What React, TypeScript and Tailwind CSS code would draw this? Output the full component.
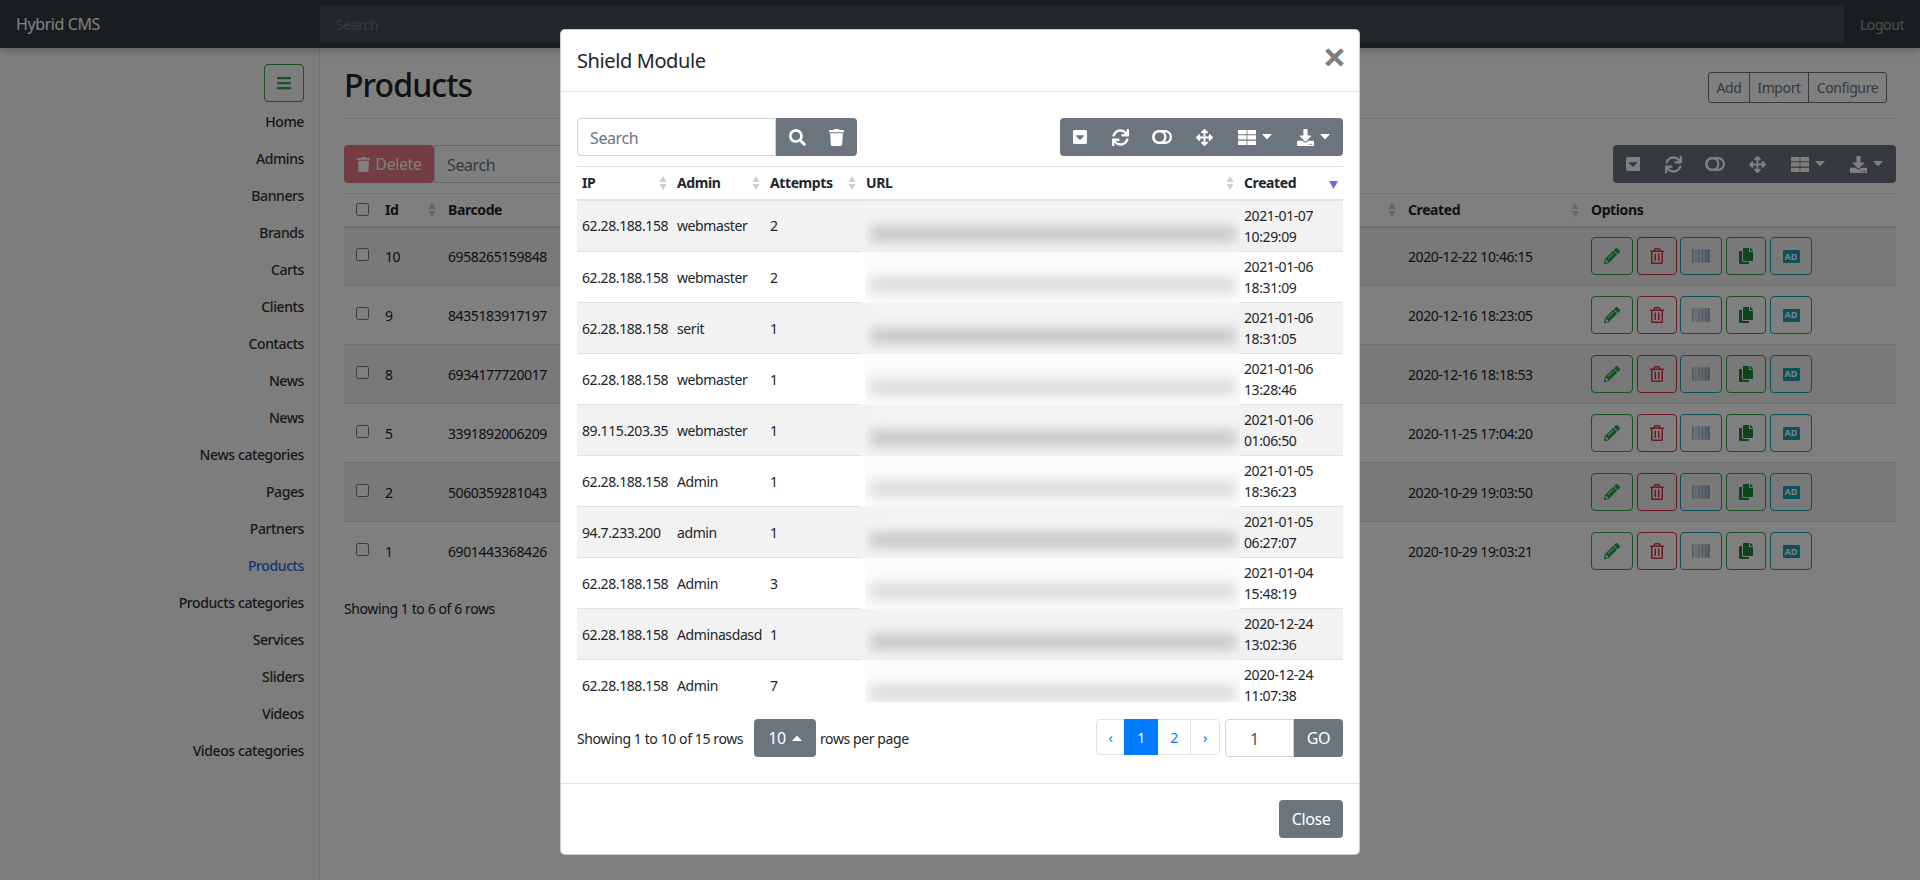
import { FaArrowsAlt, FaBars, FaBarcode, FaCaretSquareDown, FaCopy, FaDownload, FaPencilAlt, FaRegTrashAlt, FaSearch, FaSync, FaTrash } from "react-icons/fa";

const menu = ["Home", "Admins", "Banners", "Brands", "Carts", "Clients", "Contacts", "News", "News", "News categories", "Pages", "Partners", "Products", "Products categories", "Services", "Sliders", "Videos", "Videos categories"];

const products = [
  { id: 10, barcode: "6958265159848", created: "2020-12-22 10:46:15" },
  { id: 9, barcode: "8435183917197", created: "2020-12-16 18:23:05" },
  { id: 8, barcode: "6934177720017", created: "2020-12-16 18:18:53" },
  { id: 5, barcode: "3391892006209", created: "2020-11-25 17:04:20" },
  { id: 2, barcode: "5060359281043", created: "2020-10-29 19:03:50" },
  { id: 1, barcode: "6901443368426", created: "2020-10-29 19:03:21" },
];

const attempts = [
  { ip: "62.28.188.158", admin: "webmaster", n: 2, date: "2021-01-07", time: "10:29:09" },
  { ip: "62.28.188.158", admin: "webmaster", n: 2, date: "2021-01-06", time: "18:31:09" },
  { ip: "62.28.188.158", admin: "serit", n: 1, date: "2021-01-06", time: "18:31:05" },
  { ip: "62.28.188.158", admin: "webmaster", n: 1, date: "2021-01-06", time: "13:28:46" },
  { ip: "89.115.203.35", admin: "webmaster", n: 1, date: "2021-01-06", time: "01:06:50" },
  { ip: "62.28.188.158", admin: "Admin", n: 1, date: "2021-01-05", time: "18:36:23" },
  { ip: "94.7.233.200", admin: "admin", n: 1, date: "2021-01-05", time: "06:27:07" },
  { ip: "62.28.188.158", admin: "Admin", n: 3, date: "2021-01-04", time: "15:48:19" },
  { ip: "62.28.188.158", admin: "Adminasdasd", n: 1, date: "2020-12-24", time: "13:02:36" },
  { ip: "62.28.188.158", admin: "Admin", n: 7, date: "2020-12-24", time: "11:07:38" },
];

function Sort() {
  return (
    <svg width="8" height="16" viewBox="0 0 8 16" className="shrink-0 fill-[#cfcfcf]">
      <path d="M4 1 7.5 7h-7z" />
      <path d="M4 15 .5 9h7z" />
    </svg>
  );
}

function Caret() {
  return (
    <svg width="10" height="6" viewBox="0 0 10 6" className="ml-[6px] fill-white">
      <path d="M0 0h10L5 5.5z" />
    </svg>
  );
}

function Toolbar() {
  return (
    <div className="flex h-[38px] w-[283px] items-center rounded-[4px] bg-[#6c757d] text-[16px] text-white">
      <div className="flex w-[40px] justify-center"><FaCaretSquareDown /></div>
      <div className="flex w-[41px] justify-center"><FaSync size={17} /></div>
      <div className="flex w-[42px] justify-center">
        <svg width="20" height="14" viewBox="0 0 20 14" fill="none" stroke="white" strokeWidth="2.2">
          <rect x="1.1" y="1.1" width="17.8" height="11.8" rx="5.9" />
          <circle cx="7.5" cy="7" r="5.9" />
        </svg>
      </div>
      <div className="flex w-[42px] justify-center"><FaArrowsAlt size={17} /></div>
      <div className="flex w-[59px] items-center justify-center">
        <svg width="18" height="15" viewBox="0 0 18 15" className="fill-white">
          <path d="M0 0h8.6v4.3H0zM9.4 0H18v4.3H9.4zM0 5.3h8.6v4.3H0zM9.4 5.3H18v4.3H9.4zM0 10.7h8.6V15H0zM9.4 10.7H18V15H9.4z" />
        </svg>
        <Caret />
      </div>
      <div className="flex w-[59px] items-center justify-center"><FaDownload size={17} /><Caret /></div>
    </div>
  );
}

function RowButtons() {
  return (
    <div className="flex items-center text-[16px]">
      <span className="flex h-[38px] w-[42px] items-center justify-center rounded-[4px] border border-[#28a745] text-[#28a745]"><FaPencilAlt /></span>
      <span className="ml-[4px] flex h-[38px] w-[40px] items-center justify-center rounded-[4px] border border-[#dc3545] text-[#dc3545]"><FaRegTrashAlt /></span>
      <span className="ml-[3px] flex h-[38px] w-[42px] items-center justify-center rounded-[4px] border border-[#17a2b8] text-[#6c8fb0]"><FaBarcode size={18} /></span>
      <span className="ml-[4px] flex h-[38px] w-[40px] items-center justify-center rounded-[4px] border border-[#28a745] text-[#1e8a36]"><FaCopy /></span>
      <span className="ml-[4px] flex h-[38px] w-[42px] items-center justify-center rounded-[4px] border border-[#17a2b8]">
        <span className="flex h-[13px] w-[17px] items-center justify-center rounded-[1px] bg-[#17a2b8] text-[9px] font-bold tracking-normal text-white">AD</span>
      </span>
    </div>
  );
}

export default function App() {
  return (
    <div className="relative h-[880px] overflow-hidden bg-white font-['Noto_Sans','Open_Sans',sans-serif] text-[14px] tracking-[-0.4px] text-[#212529]">
      {/* Navbar */}
      <nav className="relative z-10 flex h-12 items-center bg-[#343a40] shadow-[0_2px_8px_rgba(0,0,0,0.25)]">
        <div className="w-[320px] pl-4 text-[16px] text-white">Hybrid CMS</div>
        <div className="flex h-[38px] flex-1 items-center bg-[#494e53] px-4 text-[#6c757d]">Search</div>
        <div className="flex w-[76px] justify-center text-[rgba(255,255,255,0.5)]">Logout</div>
      </nav>

      <div className="flex h-[832px]">
        {/* Sidebar */}
        <aside className="flex w-[320px] shrink-0 flex-col items-end border-r border-[#dee2e6] bg-[#fafafa] pr-[15px] pt-4">
          <span className="flex h-[38px] w-[40px] items-center justify-center rounded-[4px] border border-[#28a745] text-[16px] text-[#28a745]"><FaBars /></span>
          <ul className="mt-[1px] flex flex-col items-end">
            {menu.map((m, i) => (
              <li key={i} className={`flex h-[37px] items-center font-medium ${m === "Products" ? "text-[#2470dc]" : "text-[#333333]"}`}>{m}</li>
            ))}
          </ul>
        </aside>

        {/* Main content */}
        <main className="flex-1 pl-6 pr-6">
          <div className="flex h-[71px] items-start justify-between border-b border-[#dee2e6] pr-[9px] pt-[16px]">
            <h1 className="text-[32px] font-medium leading-[42px] tracking-[-0.9px]">Products</h1>
            <div className="mt-[8px] flex h-[31px] items-center rounded-[3px] border border-[#6c757d] text-[#6c757d]">
              <span className="flex h-full w-[40px] items-center justify-center">Add</span>
              <span className="flex h-full w-[59px] items-center justify-center border-l border-[#6c757d]">Import</span>
              <span className="flex h-full w-[78px] items-center justify-center border-l border-[#6c757d]">Configure</span>
            </div>
          </div>

          <div className="mt-[26px] flex justify-between">
            <div className="flex">
              <span className="flex h-[38px] w-[90px] items-center justify-center gap-1 rounded-[4px] bg-[#dc3545] text-[16px] text-white opacity-65"><FaTrash size={15} />Delete</span>
              <span className="flex h-[38px] w-[300px] items-center rounded-r-[4px] border border-[#ced4da] px-3 pt-[2px] text-[16px] text-[#6c757d]">Search</span>
            </div>
            <Toolbar />
          </div>

          <table className="mt-[10px] w-full table-fixed border-collapse">
            <colgroup>
              <col className="w-[29px]" />
              <col className="w-[63px]" />
              <col />
              <col className="w-[183px]" />
              <col className="w-[317px]" />
            </colgroup>
            <thead>
              <tr className="h-[33px] border-t border-b-2 border-[#dee2e6] font-bold">
                <th className="pl-3"><input type="checkbox" className="-mt-[1px] block h-[13px] w-[13px]" /></th>
                <th className="pl-3"><div className="flex items-center justify-between text-left"><span>Id</span><Sort /></div></th>
                <th className="pl-3"><div className="flex items-center justify-between text-left"><span>Barcode</span><Sort /></div></th>
                <th className="pl-3"><div className="flex items-center justify-between text-left"><span>Created</span><Sort /></div></th>
                <th className="pl-3 text-left">Options</th>
              </tr>
            </thead>
            <tbody>
              {products.map((p, i) => (
                <tr key={p.id} className={`h-[59px] border-t border-[#dee2e6] ${i % 2 === 0 ? "bg-[#f2f2f2]" : ""}`}>
                  <td className="pl-3"><input type="checkbox" className="-mt-[3px] block h-[13px] w-[13px]" /></td>
                  <td className="pl-3">{p.id}</td>
                  <td className="pl-3">{p.barcode}</td>
                  <td className="pl-3">{p.created}</td>
                  <td className="pl-3"><RowButtons /></td>
                </tr>
              ))}
            </tbody>
          </table>
          <div className="mt-[17px]">Showing 1 to 6 of 6 rows</div>
        </main>
      </div>

      {/* Modal */}
      <div className="absolute inset-0 z-20 flex justify-center bg-black/50 pt-[29px]">
        <div className="h-[826px] w-[800px] rounded-[5px] border border-black/20 bg-white">
          <div className="flex h-[62px] items-center justify-between border-b border-[#dee2e6] px-4">
            <h5 className="text-[20px] font-normal">Shield Module</h5>
            <span className="-mr-[3px] -mt-[10px] text-[42px] font-bold leading-none text-black/50">×</span>
          </div>

          <div className="px-4 pt-[26px]">
            <div className="flex justify-between">
              <div className="flex">
                <span className="flex h-[38px] w-[199px] items-center rounded-l-[4px] border border-[#ced4da] px-3 pt-[2px] text-[16px] text-[#6c757d]">Search</span>
                <span className="flex h-[38px] w-[81px] items-center justify-center gap-[22px] rounded-r-[4px] bg-[#6c757d] text-[17px] text-white"><FaSearch /><FaTrash /></span>
              </div>
              <Toolbar />
            </div>

            <div className="mt-[10px] h-[536px] overflow-hidden">
              <table className="w-full table-fixed border-collapse">
                <colgroup>
                  <col className="w-[95px]" />
                  <col className="w-[93px]" />
                  <col className="w-[96px]" />
                  <col className="w-[379px]" />
                  <col />
                </colgroup>
                <thead>
                  <tr className="h-[33px] border-t border-b-2 border-[#dee2e6] font-bold">
                    <th className="pl-[5px] pr-[5px]"><div className="flex items-center justify-between text-left"><span>IP</span><Sort /></div></th>
                    <th className="pl-[5px] pr-[5px]"><div className="flex items-center justify-between text-left"><span>Admin</span><Sort /></div></th>
                    <th className="pl-[5px] pr-[5px]"><div className="flex items-center justify-between text-left"><span>Attempts</span><Sort /></div></th>
                    <th className="pl-[5px] pr-[6px]"><div className="flex items-center justify-between text-left"><span>URL</span><Sort /></div></th>
                    <th className="pl-[4px] pr-[5px]">
                      <div className="flex items-center justify-between text-left">
                        <span>Created</span>
                        <svg width="9" height="8" viewBox="0 0 9 8" className="mt-[4px] fill-[#6f6fd6]"><path d="M0 0h9L4.5 8z" /></svg>
                      </div>
                    </th>
                  </tr>
                </thead>
                <tbody>
                  {attempts.map((a, i) => (
                    <tr key={i} className={`h-[51px] ${i % 2 === 0 ? "bg-[#f2f2f2]" : ""}`}>
                      <td className={`pl-[5px] ${i ? "border-t border-[#dee2e6]" : ""}`}>{a.ip}</td>
                      <td className={`pl-[5px] ${i ? "border-t border-[#dee2e6]" : ""}`}>{a.admin}</td>
                      <td className={`pl-[5px] ${i ? "border-t border-[#dee2e6]" : ""}`}>{a.n}</td>
                      <td className="p-0 pl-[4px]">
                        {/* URL is blurred out in the screenshot */}
                        <div className={`flex h-[51px] items-end justify-center overflow-hidden pb-[10px] ${i % 2 === 0 ? "bg-[#f3f3f3]" : "bg-[#fbfbfb]"}`}>
                          <div className={`h-[16px] w-[366px] shrink-0 blur-[6px] ${i % 2 === 0 ? "bg-[#c8c8c8]" : "bg-[#dcdcdc]"}`} />
                        </div>
                      </td>
                      <td className={`pl-[4px] leading-[21px] ${i ? "border-t border-[#dee2e6]" : ""}`}>{a.date}<br />{a.time}</td>
                    </tr>
                  ))}
                </tbody>
              </table>
            </div>

            <div className="mt-[17px] flex items-start justify-between">
              <div className="flex h-[38px] items-center">
                <span className="w-[177px]">Showing 1 to 10 of 15 rows</span>
                <span className="flex h-[38px] w-[62px] items-center justify-center rounded-[4px] bg-[#6c757d] text-[16px] text-white">
                  10
                  <svg width="10" height="6" viewBox="0 0 10 6" className="ml-[6px] fill-white"><path d="M0 6h10L5 .5z" /></svg>
                </span>
                <span className="ml-1">rows per page</span>
              </div>
              <div className="flex items-start">
                <div className="flex h-[36px] items-center rounded-[4px] border border-[#dee2e6] text-[#007bff]">
                  <span className="flex h-full w-[27px] items-center justify-center">‹</span>
                  <span className="flex h-[36px] w-[34px] items-center justify-center bg-[#007bff] text-white">1</span>
                  <span className="flex h-full w-[32px] items-center justify-center">2</span>
                  <span className="flex h-full w-[29px] items-center justify-center border-l border-[#dee2e6]">›</span>
                </div>
                <div className="ml-[5px] flex h-[38px]">
                  <span className="flex w-[69px] items-center rounded-l-[4px] border border-[#ced4da] pl-[24px] pt-[2px] text-[16px] text-[#495057]">1</span>
                  <span className="flex w-[49px] items-center justify-center rounded-r-[4px] bg-[#6c757d] text-[16px] text-white">GO</span>
                </div>
              </div>
            </div>
          </div>

          <div className="mt-[26px] flex h-[71px] items-start justify-end border-t border-[#dee2e6] px-4 pt-4">
            <span className="flex h-[38px] w-[64px] items-center justify-center rounded-[4px] bg-[#6c757d] text-[16px] text-white">Close</span>
          </div>
        </div>
      </div>
    </div>
  );
}
